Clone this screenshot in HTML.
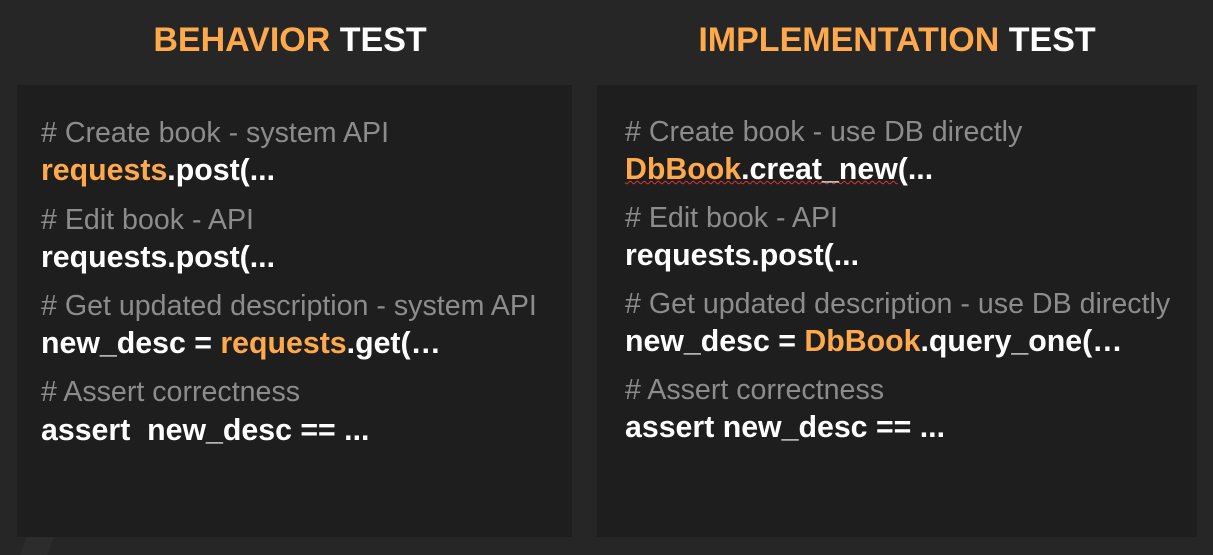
<!DOCTYPE html>
<html><head><style>
body{margin:0;width:1213px;height:555px;background:#262626;overflow:hidden;position:relative;font-family:"Liberation Sans",Arial,sans-serif}
.h{position:absolute;top:21px;font-size:34px;font-weight:bold;color:#fff;text-align:center;width:600px}
.o{color:#ffa94d}
.box{position:absolute;top:85px;height:452px;background:#1e1e1e}
.l{position:absolute;white-space:pre;line-height:30px}
.c{color:#8c8c8c;font-size:28.6px;margin-top:1px}
.k{color:#fff;font-weight:bold;font-size:30.3px;margin-top:1px}
.sq{text-decoration:underline wavy #d33;text-decoration-thickness:1px}
</style></head><body>
<div style="position:absolute;left:20px;top:537px;width:34px;height:18px;background:#2c2c2c;clip-path:polygon(20% 0,100% 0,80% 100%,0 100%)"></div>
<div class="box" style="left:17px;width:555px"></div>
<div class="box" style="left:597px;width:600px"></div>
<div class="h" style="left:-10px"><span class="o">BEHAVIOR</span> TEST</div>
<div class="h" style="left:597px"><span class="o">IMPLEMENTATION</span> TEST</div>
<div class="l c" style="left:41px;top:117px"># Create book - system API</div>
<div class="l k" style="left:41px;top:155px"><span class="o">requests</span>.post(...</div>
<div class="l c" style="left:41px;top:204px"># Edit book - API</div>
<div class="l k" style="left:41px;top:242px">requests.post(...</div>
<div class="l c" style="left:41px;top:290px"># Get updated description - system API</div>
<div class="l k" style="left:41px;top:328px">new_desc = <span class="o">requests</span>.get(…</div>
<div class="l c" style="left:41px;top:376px"># Assert correctness</div>
<div class="l k" style="left:41px;top:415px">assert  new_desc == ...</div>

<div class="l c" style="left:625px;top:116px"># Create book - use DB directly</div>
<div class="l k" style="left:625px;top:154px"><span class="sq"><span class="o">DbBook</span>.creat_new</span>(...</div>
<div class="l c" style="left:625px;top:202px"># Edit book - API</div>
<div class="l k" style="left:625px;top:240px">requests.post(...</div>
<div class="l c" style="left:625px;top:288px"># Get updated description - use DB directly</div>
<div class="l k" style="left:625px;top:326px">new_desc = <span class="o">DbBook</span>.query_one(…</div>
<div class="l c" style="left:625px;top:374px"># Assert correctness</div>
<div class="l k" style="left:625px;top:412px">assert new_desc == ...</div>
</body></html>
